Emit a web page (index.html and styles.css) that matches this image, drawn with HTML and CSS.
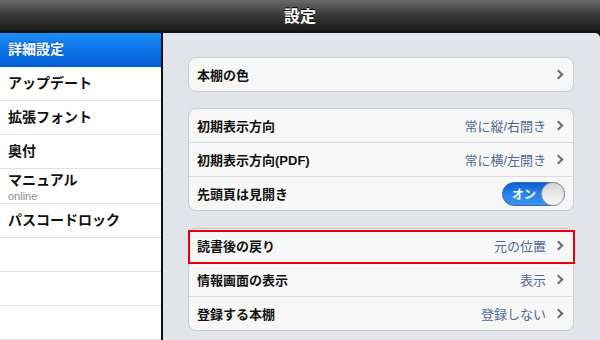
FILE: index.html
```html
<!DOCTYPE html>
<html>
<head>
    <title>設定</title>
    <link rel="stylesheet" href="styles.css">
</head>
<body>

    <div class="topbar">設定</div>

    <div class="main">
        <ul class="menu">
            <li class="menu-item selected">詳細設定</li>
            <li class="menu-item">アップデート</li>
            <li class="menu-item">拡張フォント</li>
            <li class="menu-item">奥付</li>
            <li class="menu-item two-line">マニュアル<span class="sub">online</span></li>
            <li class="menu-item">パスコードロック</li>
            <li class="menu-item"></li>
            <li class="menu-item"></li>
            <li class="menu-item"></li>
        </ul>

        <div class="panel">
            <ul class="group">
                <li class="row">
                    <span class="label">本棚の色</span>
                    <span class="chevron"></span>
                </li>
            </ul>

            <ul class="group">
                <li class="row">
                    <span class="label">初期表示方向</span>
                    <span class="value">常に縦/右開き</span>
                    <span class="chevron"></span>
                </li>
                <li class="row">
                    <span class="label">初期表示方向(PDF)</span>
                    <span class="value">常に横/左開き</span>
                    <span class="chevron"></span>
                </li>
                <li class="row">
                    <span class="label">先頭頁は見開き</span>
                    <span class="toggle"><span class="toggle-text">オン</span><span class="knob"></span></span>
                </li>
            </ul>

            <ul class="group">
                <li class="row marked">
                    <span class="label">読書後の戻り</span>
                    <span class="value">元の位置</span>
                    <span class="chevron"></span>
                </li>
                <li class="row">
                    <span class="label">情報画面の表示</span>
                    <span class="value">表示</span>
                    <span class="chevron"></span>
                </li>
                <li class="row">
                    <span class="label">登録する本棚</span>
                    <span class="value">登録しない</span>
                    <span class="chevron"></span>
                </li>
            </ul>
        </div>
    </div>

</body>
</html>
```

FILE: styles.css
```css
body {
    margin: 0;
    width: 600px;
    height: 340px;
    overflow: hidden;
    background-color: #141414;
    font-family: "Liberation Sans", "Noto Sans CJK JP", sans-serif;
}

ul {
    list-style-type: none;
    margin: 0;
    padding: 0;
}

.topbar {
    height: 33px;
    line-height: 33px;
    text-align: center;
    color: #ffffff;
    font-size: 16px;
    font-weight: bold;
    background: linear-gradient(#6a6a6a, #3a3a3a 45%, #1e1e1e 90%, #101010);
    text-shadow: 0 -1px 0 #000;
}

.main {
    display: flex;
    height: 307px;
}

.menu {
    width: 161px;
    background-color: #ffffff;
    border-right: 2px solid #101010;
}

.menu-item {
    height: 33px;
    border-bottom: 1px solid #e2e2e2;
    padding-left: 8px;
    font-size: 14px;
    font-weight: bold;
    line-height: 33px;
    color: #111111;
}

.menu-item.selected {
    background: linear-gradient(#1b8ff6, #0a6de4 60%, #0460d6);
    color: #ffffff;
    border-bottom-color: #0458c8;
    text-shadow: 0 -1px 0 rgba(0, 0, 0, 0.25);
}

.two-line {
    line-height: 18px;
    padding-top: 2px;
    height: 32px;
}

.sub {
    display: block;
    font-size: 11px;
    font-weight: normal;
    line-height: 14px;
    color: #8a8a8a;
}

.panel {
    flex: 1;
    background-color: #e1e4e9;
    border-top-right-radius: 5px;
    padding: 24px 26px 0 25px;
}

.group {
    background-color: #f7f7f7;
    border: 1px solid #c8cacd;
    border-radius: 8px;
    margin-bottom: 16px;
}

.group:last-child {
    margin-top: 17px;
}

.group + .group + .group {
    margin-top: 17px;
}

.row {
    display: flex;
    align-items: center;
    height: 33px;
    padding: 0 9px 0 8px;
    border-top: 1px solid #dcdcdc;
}

.row:first-child {
    border-top: none;
}

.label {
    flex: 1;
    font-size: 13px;
    font-weight: bold;
    color: #111111;
}

.value {
    font-size: 13px;
    color: #4e6a92;
    margin-right: 9px;
}

.chevron {
    width: 5px;
    height: 5px;
    border-top: 2px solid #6e6e6e;
    border-right: 2px solid #6e6e6e;
    transform: rotate(45deg);
    margin-right: 2px;
}

.marked {
    position: relative;
}

.marked::after {
    content: "";
    position: absolute;
    left: -1px;
    right: -2px;
    top: 1px;
    bottom: -2px;
    border: 2px solid #e8000b;
}

.toggle {
    display: flex;
    align-items: center;
    width: 61px;
    height: 22px;
    border-radius: 12px;
    border: 1px solid #2a6cc0;
    background: linear-gradient(#0f5fd0, #2a86ea 55%, #3b93ee);
    position: relative;
    margin-right: -1px;
}

.toggle-text {
    color: #ffffff;
    font-size: 12px;
    font-weight: bold;
    padding-left: 9px;
}

.knob {
    position: absolute;
    right: -1px;
    top: -1px;
    width: 22px;
    height: 22px;
    border-radius: 50%;
    border: 1px solid #9a9a9a;
    background: linear-gradient(#d4d4d4, #fafafa);
}
```
